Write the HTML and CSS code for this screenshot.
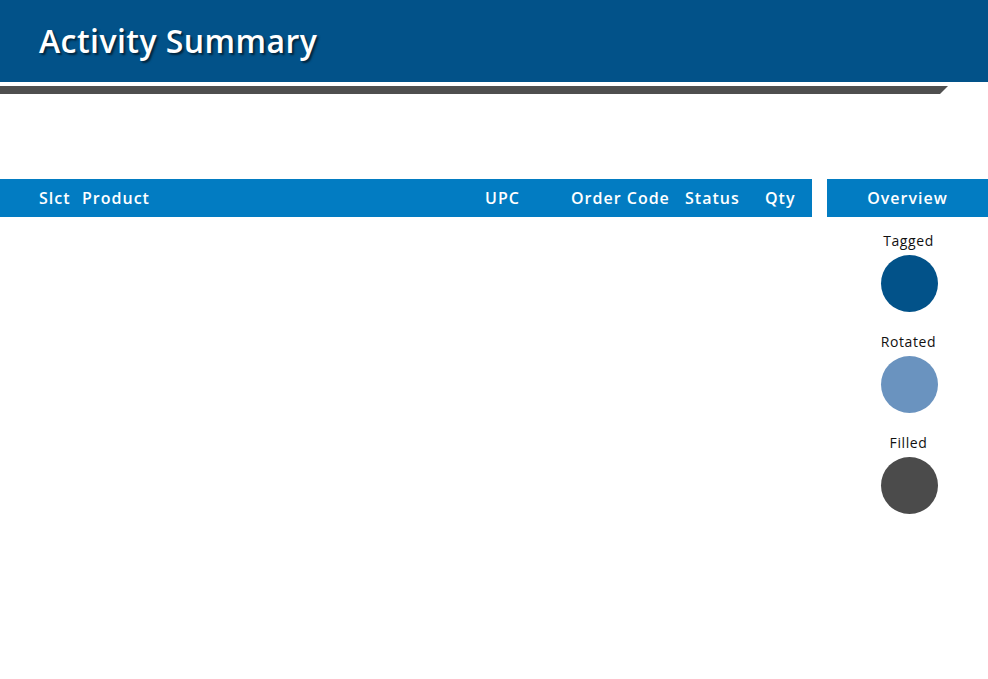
FILE: index.html
```html
<!DOCTYPE html>
<html lang="en">
<head>
<meta charset="utf-8">
<title>Activity Summary</title>
<link rel="stylesheet" href="styles.css">
</head>
<body>
<header class="top">
  <h1 class="title">Activity Summary</h1>
</header>
<div class="rule"></div>
<main class="content">
  <section class="table">
    <div class="thead">
      <span>Slct</span>
      <span>Product</span>
      <span>UPC</span>
      <span>Order Code</span>
      <span>Status</span>
      <span>Qty</span>
    </div>
  </section>
  <aside class="overview">
    <div class="ov-head">Overview</div>
    <div class="legend">
      <div class="item"><span class="label">Tagged</span><span class="dot tagged"></span></div>
      <div class="item"><span class="label">Rotated</span><span class="dot rotated"></span></div>
      <div class="item"><span class="label">Filled</span><span class="dot filled"></span></div>
    </div>
  </aside>
</main>
</body>
</html>
```

FILE: styles.css
```css
* { box-sizing: border-box; }
html, body { margin: 0; padding: 0; background: #fff; }
body {
  font-family: "Open Sans", "Liberation Sans", sans-serif;
  width: 988px;
  height: 679px;
  overflow: hidden;
}
.top {
  background: #025289;
  height: 82px;
  padding-left: 39px;
  display: flex;
  align-items: center;
}
.title {
  margin: 0;
  color: #fff;
  font-size: 32px;
  font-weight: 600;
  letter-spacing: 0.45px;
  text-shadow: 2px 2px 2px rgba(0, 0, 0, 0.55);
  padding-bottom: 1px;
}
.rule {
  margin-top: 4px;
  height: 8px;
  width: 948px;
  background: #4f4f4f;
  clip-path: polygon(0 0, 100% 0, 940px 100%, 0 100%);
}
.content {
  margin-top: 85px;
  display: flex;
  gap: 15px;
}
.table { width: 812px; }
.thead {
  background: #027cc2;
  height: 38px;
  display: grid;
  grid-template-columns: 43px 403px 86px 114px 80px 1fr;
  align-items: center;
  padding-left: 39px;
  color: #fff;
  font-size: 16px;
  font-weight: 600;
  letter-spacing: 1px;
}
.overview { flex: 1; }
.ov-head {
  background: #027cc2;
  height: 38px;
  display: flex;
  align-items: center;
  justify-content: center;
  color: #fff;
  font-size: 16px;
  font-weight: 600;
  letter-spacing: 1px;
}
.legend {
  padding-top: 15px;
  display: flex;
  flex-direction: column;
  align-items: center;
  gap: 21px;
  padding-left: 2px;
}
.item {
  display: flex;
  flex-direction: column;
  align-items: center;
  gap: 6px;
}
.label {
  font-size: 14px;
  line-height: 17px;
  color: #111;
  letter-spacing: 0.6px;
}
.dot {
  width: 57px;
  height: 57px;
  border-radius: 50%;
  display: block;
  margin-left: 2px;
}
.tagged { background: #025289; }
.rotated { background: #6a93bf; }
.filled { background: #4b4b4b; }
```
